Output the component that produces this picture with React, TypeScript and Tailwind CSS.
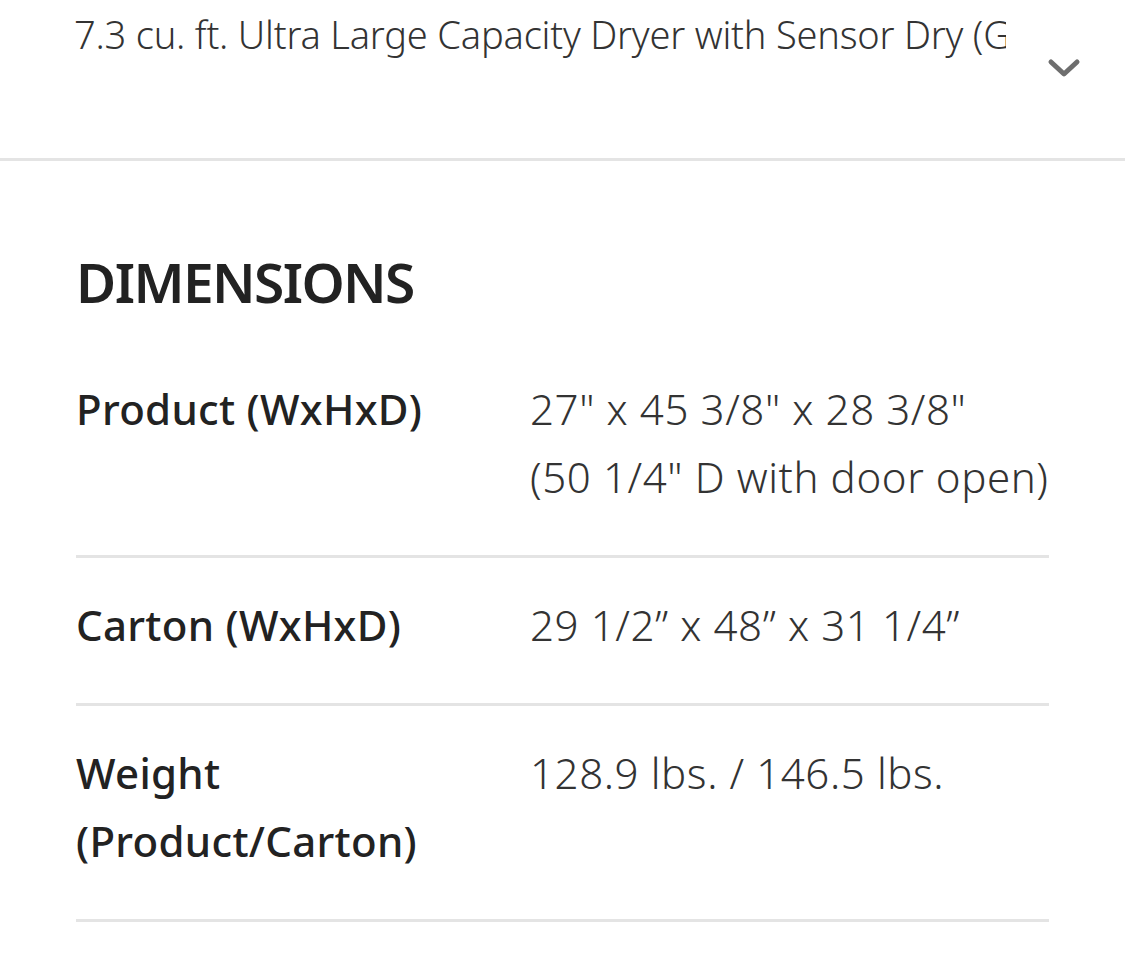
import React from "react";

const rows = [
  { label: ["Product (WxHxD)"], value: ['27" x 45 3/8" x 28 3/8"', '(50 1/4" D with door open)'] },
  { label: ["Carton (WxHxD)"], value: ["29 1/2\u201D x 48\u201D x 31 1/4\u201D"] },
  { label: ["Weight", "(Product/Carton)"], value: ["128.9 lbs. / 146.5 lbs."] },
];

export default function App() {
  return (
    <div className="w-[1125px] h-[963px] bg-white overflow-hidden" style={{ fontFamily: '"Noto Sans", "Open Sans", sans-serif' }}>
      <div className="h-[161px] border-b-[3px] border-[#e4e4e4] flex items-start pl-[74px] pr-[44px]">
        <div className="w-[932px] overflow-hidden whitespace-nowrap text-[38px] leading-[68px] font-light text-[#333333] tracking-[-0.2px]">
          7.3 cu. ft. Ultra Large Capacity Dryer with Sensor Dry (GDLE7300)
        </div>
        <div className="ml-auto mt-[56px]">
          <svg width="34" height="24" viewBox="0 0 34 24">
            <path d="M4 6 L17 18 L30 6" fill="none" stroke="#6e6e6e" strokeWidth="5" strokeLinecap="round" strokeLinejoin="round" />
          </svg>
        </div>
      </div>
      <div className="pl-[76px] pr-[76px]">
        <h2 className="mt-[81px] text-[55px] leading-[80px] font-semibold text-[#222222] tracking-[-1.6px]">DIMENSIONS</h2>
        <div className="mt-[53px]">
          {rows.map((r, i) => (
            <div key={i} className={`flex ${i === 0 ? "pt-0" : "pt-[33px]"} pb-[44px] border-b-[3px] border-[#e4e4e4]`}>
              <div className="w-[454px] shrink-0 text-[42px] leading-[68px] font-medium text-[#222222] tracking-[0.3px]">
                {r.label.map((l, j) => (
                  <div key={j}>{l}</div>
                ))}
              </div>
              <div className="text-[42px] leading-[68px] font-light text-[#333333] tracking-[0.6px]">
                {r.value.map((v, j) => (
                  <div key={j}>{v}</div>
                ))}
              </div>
            </div>
          ))}
        </div>
      </div>
    </div>
  );
}
